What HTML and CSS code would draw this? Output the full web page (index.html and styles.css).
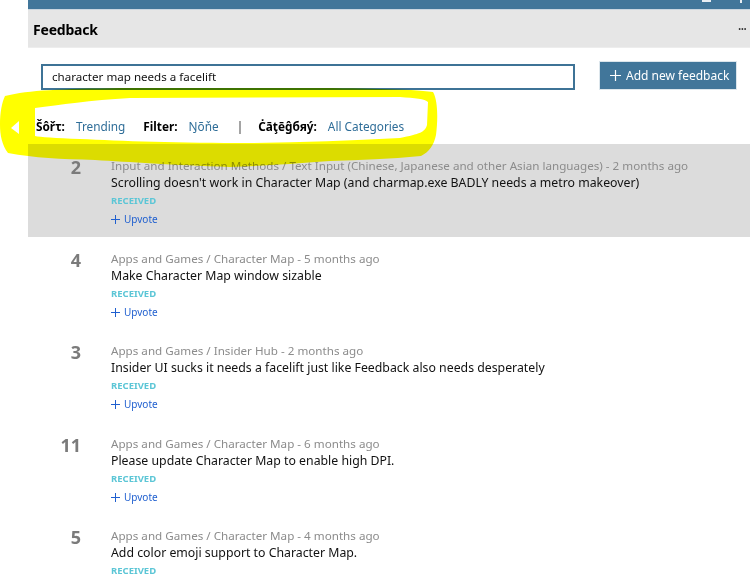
FILE: index.html
```html
<!DOCTYPE html>
<html>
<head>
<meta charset="utf-8">
<link rel="stylesheet" href="styles.css">
</head>
<body>
<div class="app">
  <div class="titlebar">
    <span class="ctl-min"></span>
    <span class="ctl-max"></span>
  </div>
  <div class="header">
    <h1 class="title">Feedback</h1>
    <span class="more">&middot;&middot;&middot;</span>
  </div>
  <div class="search-row">
    <div class="search-box">character map needs a facelift</div>
    <button class="add-btn">
      <svg class="plus" width="11" height="11" viewBox="0 0 11 11"><path d="M5.5 0V11M0 5.5H11" stroke="#fff" stroke-width="1.2"/></svg>
      <span>Add new feedback</span>
    </button>
  </div>
  <div class="filter-row">
    <span class="lbl">Šôřτ:</span><span class="val">Trending</span>
    <span class="lbl">Filter:</span><span class="val">Ŋõňe</span>
    <span class="sep">|</span>
    <span class="lbl">Ċāţēĝбяý:</span><span class="val">All Categories</span>
  </div>
  <ul class="list">
    <li class="item selected">
      <div class="votes">2</div>
      <div class="body">
        <div class="meta">Input and Interaction Methods / Text Input (Chinese, Japanese and other Asian languages) - 2 months ago</div>
        <div class="ftitle">Scrolling doesn't work in Character Map (and charmap.exe BADLY needs a metro makeover)</div>
        <div class="status">RECEIVED</div>
        <div class="upvote"><svg width="9" height="9" viewBox="0 0 9 9"><path d="M4.5 0V9M0 4.5H9" stroke="#1f5fcf" stroke-width="1"/></svg>Upvote</div>
      </div>
    </li>
    <li class="item">
      <div class="votes">4</div>
      <div class="body">
        <div class="meta">Apps and Games / Character Map - 5 months ago</div>
        <div class="ftitle">Make Character Map window sizable</div>
        <div class="status">RECEIVED</div>
        <div class="upvote"><svg width="9" height="9" viewBox="0 0 9 9"><path d="M4.5 0V9M0 4.5H9" stroke="#1f5fcf" stroke-width="1"/></svg>Upvote</div>
      </div>
    </li>
    <li class="item">
      <div class="votes">3</div>
      <div class="body">
        <div class="meta">Apps and Games / Insider Hub - 2 months ago</div>
        <div class="ftitle">Insider UI sucks it needs a facelift just like Feedback also needs desperately</div>
        <div class="status">RECEIVED</div>
        <div class="upvote"><svg width="9" height="9" viewBox="0 0 9 9"><path d="M4.5 0V9M0 4.5H9" stroke="#1f5fcf" stroke-width="1"/></svg>Upvote</div>
      </div>
    </li>
    <li class="item">
      <div class="votes">11</div>
      <div class="body">
        <div class="meta">Apps and Games / Character Map - 6 months ago</div>
        <div class="ftitle">Please update Character Map to enable high DPI.</div>
        <div class="status">RECEIVED</div>
        <div class="upvote"><svg width="9" height="9" viewBox="0 0 9 9"><path d="M4.5 0V9M0 4.5H9" stroke="#1f5fcf" stroke-width="1"/></svg>Upvote</div>
      </div>
    </li>
    <li class="item">
      <div class="votes">5</div>
      <div class="body">
        <div class="meta">Apps and Games / Character Map - 4 months ago</div>
        <div class="ftitle">Add color emoji support to Character Map.</div>
        <div class="status">RECEIVED</div>
      </div>
    </li>
  </ul>
</div>
<svg class="marker" width="450" height="180" viewBox="0 0 450 180">
  <path fill="#ffff00" fill-rule="evenodd" d="M5 96 C30 90 60 89 120 88 L300 88 C360 88 410 89 433 92 C438 100 438 120 436 135 C434 145 429 152 421 156 C390 159 360 160 330 161 C290 164 260 166 230 167 C170 165 130 162 95 160 C60 159 35 158 8 153 C2 145 0 135 0 125 C0 112 2 102 5 96 Z M35 108 C60 105 90 100 130 98 L400 97 C415 98 425 99 428 102 L427 125 C425 132 420 134 400 138 C350 141 300 142 250 143 C180 143 120 141 80 139 C55 138 40 137 35 136 Z M11 128 L19 121 L19 134 Z"/>
</svg>
</body>
</html>
```

FILE: styles.css
```css
* { box-sizing: border-box; }
html, body { margin: 0; padding: 0; background: #fff; }
body {
  font-family: "Noto Sans", "Open Sans", sans-serif;
  color: #000;
  width: 750px;
  height: 577px;
  overflow: hidden;
  position: relative;
}
.app {
  margin-left: 28px;
  width: 722px;
}
.titlebar {
  background: #41769a;
  border-bottom: 1px solid #c9d6e0;
  height: 10px;
  position: relative;
}
.ctl-min {
  position: absolute;
  left: 674px;
  top: 0;
  width: 9px;
  height: 2px;
  background: #e8eef3;
}
.ctl-max {
  position: absolute;
  left: 712px;
  top: 0;
  width: 2px;
  height: 3px;
  background: #e8eef3;
}
.header {
  height: 38px;
  background: #e6e6e6;
  display: flex;
  align-items: center;
  justify-content: space-between;
  padding-left: 5px;
  border-bottom: 1px solid #ededed;
}
.title {
  margin: 0;
  font-size: 14px;
  font-weight: 700;
  letter-spacing: -0.2px;
  padding-top: 2px;
}
.more {
  font-size: 14px;
  color: #333;
  letter-spacing: -1px;
  padding-right: 4px;
}
.search-row {
  display: flex;
  align-items: center;
  padding: 15px 0 0 13px;
  gap: 24px;
}
.search-box {
  width: 534px;
  height: 26px;
  border: 2px solid #3e7396;
  font-size: 11.6px;
  line-height: 22px;
  padding-left: 9px;
  color: #111;
}
.add-btn {
  width: 138px;
  height: 29px;
  background: #41769a;
  border: 1px solid #dce6ec;
  color: #fff;
  font-family: inherit;
  font-size: 12px;
  display: flex;
  align-items: center;
  gap: 5px;
  padding: 0 0 0 10px;
  margin-top: -2px;
}
.filter-row {
  display: flex;
  align-items: center;
  padding: 18px 0 0 8px;
  height: 54px;
  font-size: 11.8px;
}
.lbl { font-weight: 700; margin-right: 11px; }
.val { color: #2e6d98; margin-right: 18px; }
.sep { color: #333; margin: 0 15px 0 0; }
.list {
  list-style: none;
  margin: 0;
  padding: 0;
}
.item {
  display: flex;
  height: 92.5px;
  padding-top: 13px;
}
.item.selected { background: #dcdcdc; }
.votes {
  width: 53px;
  text-align: right;
  font-size: 18px;
  font-weight: 700;
  color: #7b7b7b;
  line-height: 20px;
}
.body {
  margin-left: 30px;
}
.meta {
  font-size: 11.65px;
  color: #8c8c8c;
  line-height: 17px;
}
.ftitle {
  font-size: 12.3px;
  color: #111;
  line-height: 17px;
}
.status {
  font-size: 9.5px;
  font-weight: 700;
  color: #5cc6d6;
  line-height: 18px;
  padding-top: 1px;
}
.upvote {
  font-size: 10px;
  color: #1f5fcf;
  line-height: 19px;
  display: flex;
  align-items: center;
  gap: 4px;
}
.marker {
  position: absolute;
  left: 0;
  top: 0;
  mix-blend-mode: multiply;
  pointer-events: none;
}
```
